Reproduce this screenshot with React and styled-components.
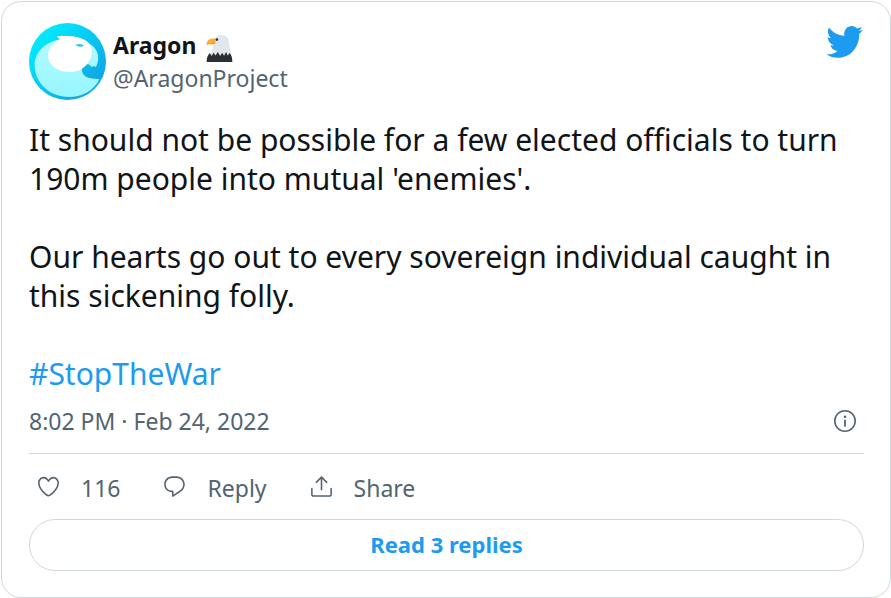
import React from 'react'
import styled, { createGlobalStyle } from 'styled-components'

const colors = {
  text: '#0f1419',
  muted: '#536471',
  blue: '#1d9bf0',
  border: '#cfd9de',
}

const GlobalStyle = createGlobalStyle`
  * {
    box-sizing: border-box;
  }

  body {
    margin: 0;
    background: #fff;
    font-family: 'Noto Sans', 'Open Sans', sans-serif;
    color: ${colors.text};
  }
`

const Card = styled.article`
  margin: 1px 0 0 1px;
  padding: 21px 26px 26px 27px;
  border: 1px solid ${colors.border};
  border-radius: 20px;
  background: #fff;
`

const Header = styled.header`
  display: flex;
  align-items: flex-start;
  justify-content: space-between;
`

const Author = styled.a`
  display: flex;
  align-items: center;
  gap: 7px;
  color: inherit;
  text-decoration: none;
`

const Names = styled.div`
  display: flex;
  flex-direction: column;
  font-size: 23px;
  line-height: 33px;
`

const Name = styled.span`
  display: flex;
  align-items: flex-end;
  gap: 10px;
  font-weight: 700;
`

const Handle = styled.span`
  color: ${colors.muted};
`

const Body = styled.div`
  margin-top: 20px;
  font-size: 30px;
  line-height: 39px;

  p {
    margin: 0 0 39px;
  }

  p:last-child {
    margin: 0;
  }

  a {
    color: ${colors.blue};
    text-decoration: none;
  }
`

const Meta = styled.div`
  display: flex;
  align-items: center;
  justify-content: space-between;
  padding: 10px 7px 14px 0;
  border-bottom: 1px solid ${colors.border};
  color: ${colors.muted};
  font-size: 23px;
  line-height: 36px;
`

const InfoLink = styled.a`
  display: flex;
  color: ${colors.muted};
`

const Icon = styled.svg`
  display: block;
  flex: none;
  width: ${({ $w }) => $w || 25}px;
  height: ${({ $h, $w }) => $h || $w || 25}px;
  fill: currentColor;
`

const Actions = styled.div`
  display: flex;
  gap: 42px;
  padding: 16px 7px 12px;
`

const Action = styled.button`
  display: flex;
  align-items: center;
  gap: 20px;
  padding: 0;
  border: 0;
  background: none;
  color: ${colors.muted};
  font: inherit;
  font-size: 23px;
  line-height: 37px;
  cursor: pointer;

  ${Icon} {
    margin-bottom: 4px;
  }
`

const Replies = styled.button`
  display: block;
  width: 100%;
  padding: 7px 8px 9px;
  border: 1px solid ${colors.border};
  border-radius: 26px;
  background: none;
  color: ${colors.blue};
  font: inherit;
  font-size: 22px;
  font-weight: 700;
  line-height: 34px;
  cursor: pointer;
`

const Avatar = () => (
  <Icon $w={77} viewBox="24 22 234 234" role="img" aria-label="Aragon">
    <defs>
      <linearGradient id="sky" x1="0" y1="0" x2="1" y2="1">
        <stop offset="0.1" stopColor="#00f0ff" />
        <stop offset="0.8" stopColor="#0fa8e6" />
      </linearGradient>
      <linearGradient id="feather" x1="0" y1="0" x2="0" y2="1">
        <stop offset="0" stopColor="#b4fbff" />
        <stop offset="1" stopColor="#98f6ff" />
      </linearGradient>
    </defs>
    <circle cx="141" cy="139" r="117" fill="url(#sky)" />
    <path
      fill="url(#feather)"
      d="M118 72L109 62C145 60 190 62 208 86C226 95 236 114 234 134C233 145 230 151 227 156C223 153 218 153 213 156C211 148 203 146 196 149C186 152 183 162 186 172C191 188 212 193 238 192C222 228 184 247 145 247C88 247 41 205 41 149C41 112 72 79 118 72Z"
    />
    <path
      fill="#fff"
      d="M118 72L109 62C145 60 190 62 208 86C218 102 217 124 206 138C196 158 174 171 147 171C110 171 82 149 82 121C82 99 96 82 118 72Z"
    />
    <path fill="#3cc4ea" d="M165 88C175 84 187 86 191 91C184 96 173 96 165 88Z" />
  </Icon>
)

const Eagle = () => (
  <Icon $w={27} viewBox="0 0 82 82" role="img" aria-label="eagle">
    <path fill="#e1e8ed" d="M25 14C27 5 36 0 48 0C62 0 70 10 71 26C72 46 77 58 79 74L6 76C12 60 20 48 22 34C23 28 23 20 25 14Z" />
    <path fill="#ffac33" d="M27 11C15 9 5 14 3 22C1 26 2 29 5 31C8 27 14 28 20 29C25 29 28 26 29 22Z" />
    <path fill="#e08e20" d="M8 24C15 26 23 24 28 21C26 28 19 28 8 24Z" />
    <circle cx="33" cy="14" r="4" fill="#292f33" />
    <path
      fill="#292f33"
      d="M2 82C2 70 5 61 12 55L17 64L23 54L29 62L36 52L43 64L49 54L55 63L61 52L66 62L72 55C78 62 80 72 80 82Z"
    />
  </Icon>
)

const Bird = () => (
  <Icon $w={37} $h={32} viewBox="0.7 2.7 23 18.6" preserveAspectRatio="none" aria-hidden="true">
    <path d="M23.643 4.937c-.835.37-1.732.62-2.675.733.962-.576 1.7-1.49 2.048-2.578-.9.534-1.897.922-2.958 1.13-.85-.904-2.06-1.47-3.4-1.47-2.572 0-4.658 2.086-4.658 4.66 0 .364.042.718.12 1.06-3.873-.195-7.304-2.05-9.602-4.868-.4.69-.63 1.49-.63 2.342 0 1.616.823 3.043 2.072 3.878-.764-.025-1.482-.234-2.11-.583v.06c0 2.257 1.605 4.14 3.737 4.568-.392.106-.803.162-1.227.162-.3 0-.593-.028-.877-.082.593 1.85 2.313 3.198 4.352 3.234-1.595 1.25-3.604 1.995-5.786 1.995-.376 0-.747-.022-1.112-.065 2.062 1.323 4.51 2.093 7.14 2.093 8.57 0 13.255-7.098 13.255-13.254 0-.2-.005-.402-.014-.602.91-.658 1.7-1.477 2.323-2.41z" />
  </Icon>
)

const BirdLink = styled.a`
  display: flex;
  padding: 3px 1px 0 0;
  color: ${colors.blue};
`

const icons = {
  heart: [
    'M12 21.638h-.014C9.403 21.59 1.95 14.856 1.95 8.478c0-3.064 2.525-5.754 5.403-5.754 2.29 0 3.83 1.58 4.646 2.73.814-1.148 2.354-2.73 4.645-2.73 2.88 0 5.404 2.69 5.404 5.755 0 6.376-7.454 13.11-10.037 13.157H12zM7.354 4.225c-2.08 0-3.903 1.988-3.903 4.255 0 5.74 7.034 11.596 8.55 11.658 1.518-.062 8.55-5.917 8.55-11.658 0-2.267-1.823-4.255-3.903-4.255-2.528 0-3.94 2.936-3.952 2.965-.23.562-1.156.562-1.387 0-.014-.03-1.425-2.965-3.954-2.965z',
  ],
  reply: [
    'M14.046 2.242l-4.148-.01h-.002c-4.374 0-7.8 3.427-7.8 7.802 0 4.098 3.186 7.206 7.465 7.37v3.828c0 .108.044.286.12.403.142.225.384.347.632.347.138 0 .277-.038.402-.118.264-.168 6.473-4.14 8.088-5.506 1.902-1.61 3.04-3.97 3.043-6.312v-.017c-.006-4.367-3.43-7.787-7.8-7.788zm3.787 12.972c-1.134.96-4.862 3.405-6.772 4.643V16.67c0-.414-.335-.75-.75-.75h-.396c-3.66 0-6.318-2.476-6.318-5.886 0-3.534 2.768-6.302 6.3-6.302l4.147.01h.002c3.532 0 6.3 2.766 6.302 6.296-.003 1.91-.942 3.844-2.514 5.176z',
  ],
  share: [
    'M17.53 7.47l-5-5c-.293-.293-.768-.293-1.06 0l-5 5c-.294.293-.294.768 0 1.06s.767.294 1.06 0l3.72-3.72V15c0 .414.336.75.75.75s.75-.336.75-.75V4.81l3.72 3.72c.146.147.338.22.53.22s.384-.072.53-.22c.293-.293.293-.767 0-1.06z',
    'M19.708 21.944H4.292C3.028 21.944 2 20.916 2 19.652V14c0-.414.336-.75.75-.75s.75.336.75.75v5.652c0 .437.355.792.792.792h15.416c.437 0 .792-.355.792-.792V14c0-.414.336-.75.75-.75s.75.336.75.75v5.652c0 1.264-1.028 2.292-2.292 2.292z',
  ],
}

const actions = [
  { icon: 'heart', label: '116' },
  { icon: 'reply', label: 'Reply' },
  { icon: 'share', label: 'Share' },
]

const App = () => {
  return (
    <>
      <GlobalStyle />
      <Card>
        <Header>
          <Author href="#profile">
            <Avatar />
            <Names>
              <Name>Aragon <Eagle /></Name>
              <Handle>@AragonProject</Handle>
            </Names>
          </Author>
          <BirdLink href="#tweet" aria-label="View on Twitter"><Bird /></BirdLink>
        </Header>

        <Body>
          <p>It should not be possible for a few elected officials to turn 190m people into mutual 'enemies'.</p>
          <p>Our hearts go out to every sovereign individual caught in this sickening folly.</p>
          <p><a href="#StopTheWar">#StopTheWar</a></p>
        </Body>

        <Meta>
          <time dateTime="2022-02-24T20:02">8:02 PM · Feb 24, 2022</time>
          <InfoLink href="#info" aria-label="Twitter Ads info and privacy">
            <Icon $w={24} viewBox="0 0 24 24">
              <circle cx="12" cy="12" r="10.2" fill="none" stroke="currentColor" strokeWidth="1.6" />
              <circle cx="12" cy="7.8" r="1.3" />
              <rect x="11.1" y="10.6" width="1.8" height="7.2" rx="0.9" />
            </Icon>
          </InfoLink>
        </Meta>

        <Actions>
          {actions.map(({ icon, label }) => (
            <Action key={icon} type="button">
              <Icon viewBox="0 0 24 24" aria-hidden="true">
                {icons[icon].map((d) => <path key={d} d={d} />)}
              </Icon>
              {label}
            </Action>
          ))}
        </Actions>

        <Replies type="button">Read 3 replies</Replies>
      </Card>
    </>
  )
}

export default App
